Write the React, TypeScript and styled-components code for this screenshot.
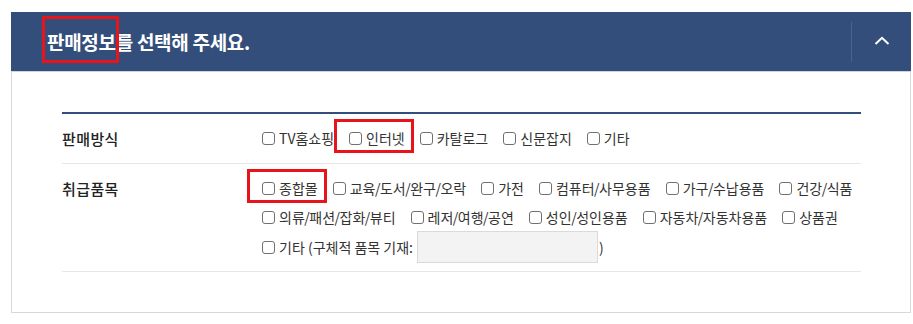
import { FC, ReactElement, Fragment } from 'react'
import styled, { createGlobalStyle, css } from 'styled-components'

const GlobalStyle = createGlobalStyle`
  body {
    margin: 0;
    background: #fff;
    font-family: 'Noto Sans CJK KR', 'Noto Sans', sans-serif;
  }
`

const salesMethods = [
  { label: 'TV홈쇼핑' },
  { label: '인터넷', marked: true },
  { label: '카탈로그' },
  { label: '신문잡지' },
  { label: '기타' }
]

const itemLines = [
  [
    { label: '종합몰', marked: true },
    { label: '교육/도서/완구/오락' },
    { label: '가전' },
    { label: '컴퓨터/사무용품' },
    { label: '가구/수납용품' },
    { label: '건강/식품' }
  ],
  [
    { label: '의류/패션/잡화/뷰티' },
    { label: '레저/여행/공연' },
    { label: '성인/성인용품' },
    { label: '자동차/자동차용품' },
    { label: '상품권' }
  ]
]

type Opt = { label: string, marked?: boolean }

// slashes are a bit wide in Noto, tighten them up
const withSlashes = (text: string) =>
  text.split('/').map((part, i) => (
    <Fragment key={i}>
      {i > 0 && <Slash>/</Slash>}
      {part}
    </Fragment>
  ))

const Option: FC<Opt> = ({ label, marked }): ReactElement => (
  <OptionLabel $marked={marked}>
    <Check type='checkbox' />
    <span>{withSlashes(label)}</span>
  </OptionLabel>
)

const App: FC = (): ReactElement => {
  return (
    <>
      <GlobalStyle />
      <Panel>
        <Header>
          <Title><Marked>판매정보</Marked>를 선택해 주세요.</Title>
          <Toggle type='button' aria-label='접기'>
            <svg width='16' height='9' viewBox='0 0 16 9'>
              <polyline points='1.5,8 8,1.8 14.5,8' fill='none' stroke='#fff' strokeWidth='2' />
            </svg>
          </Toggle>
        </Header>
        <Body>
          <Table>
            <Row>
              <RowLabel>판매방식</RowLabel>
              <Options>
                <Line>
                  {salesMethods.map(o => <Option key={o.label} {...o} />)}
                </Line>
              </Options>
            </Row>
            <Row $last>
              <RowLabel>취급품목</RowLabel>
              <Options>
                {itemLines.map((line, i) => (
                  <Line key={i}>
                    {line.map(o => <Option key={o.label} {...o} />)}
                  </Line>
                ))}
                <Line>
                  <OptionLabel>
                    <Check type='checkbox' />
                    <span>기타 (구체적 품목 기재:</span>
                  </OptionLabel>
                  <EtcInput type='text' />
                  <Paren>)</Paren>
                </Line>
              </Options>
            </Row>
          </Table>
        </Body>
      </Panel>
    </>
  )
}

const redBox = css`
  content: '';
  position: absolute;
  border: 3px solid #e8141c;
  pointer-events: none;
`

const Panel = styled.section`
  width: 900px;
  margin: 12px 0 0 11px;
`
const Header = styled.div`
  display: flex;
  align-items: center;
  height: 59px;
  background-color: #344e7b;
  padding-left: 36px;
`
const Title = styled.h2`
  flex: 1;
  margin: 0;
  color: #fff;
  font-size: 19px;
  font-weight: 700;
  letter-spacing: -0.3px;
`
const Marked = styled.span`
  position: relative;

  &::after {
    ${redBox}
    top: -12px;
    bottom: -8px;
    left: -5px;
    right: -3px;
  }
`
const Toggle = styled.button`
  display: flex;
  align-items: center;
  justify-content: center;
  width: 60px;
  height: 40px;
  padding: 0 0 2px;
  background: none;
  border: 0;
  border-left: 1px solid #4b6391;
  cursor: pointer;
`
const Body = styled.div`
  border: 1px solid #d8d8d8;
  border-top-color: #cfd3dc;
  padding: 40px 49px 40px 50px;
`
const Table = styled.div`
  border-top: 2px solid #344e7b;
`
const Row = styled.div<{ $last?: boolean }>`
  display: flex;
  padding: 9px 0 ${p => p.$last ? '8px' : '11px'};
  border-bottom: 1px solid #e6e6e6;
`
const RowLabel = styled.div`
  flex: 0 0 200px;
  height: 29px;
  line-height: 32px;
  font-size: 15px;
  font-weight: 500;
  letter-spacing: 0.4px;
  color: #222;
`
const Options = styled.div`
  display: flex;
  flex-direction: column;
`
const Line = styled.div`
  display: flex;
  align-items: center;
  min-height: 29px;
`
const OptionLabel = styled.label<{ $marked?: boolean }>`
  position: relative;
  display: inline-flex;
  align-items: center;
  height: 29px;
  margin-right: 15px;
  font-size: 14px;
  color: #333;
  white-space: nowrap;
  cursor: pointer;

  &:last-child {
    margin-right: 0;
  }

  ${p => p.$marked && css`
    &::after {
      ${redBox}
      top: -4px;
      bottom: -1px;
      left: -15px;
      right: -9px;
    }
  `}
`
const Slash = styled.span`
  margin: 0 -0.5px;
`
const Check = styled.input`
  appearance: none;
  flex: 0 0 auto;
  width: 13px;
  height: 13px;
  margin: 1px 4px 0 0;
  border: 1px solid #707070;
  border-radius: 3px;
  background: #fff;
  cursor: pointer;
`
const EtcInput = styled.input`
  width: 181px;
  height: 32px;
  box-sizing: border-box;
  margin: 0 1px 0 -11px;
  background: #f3f3f3;
  border: 1px solid #dadada;
`
const Paren = styled.span`
  font-size: 14px;
  color: #333;
`

export default App
